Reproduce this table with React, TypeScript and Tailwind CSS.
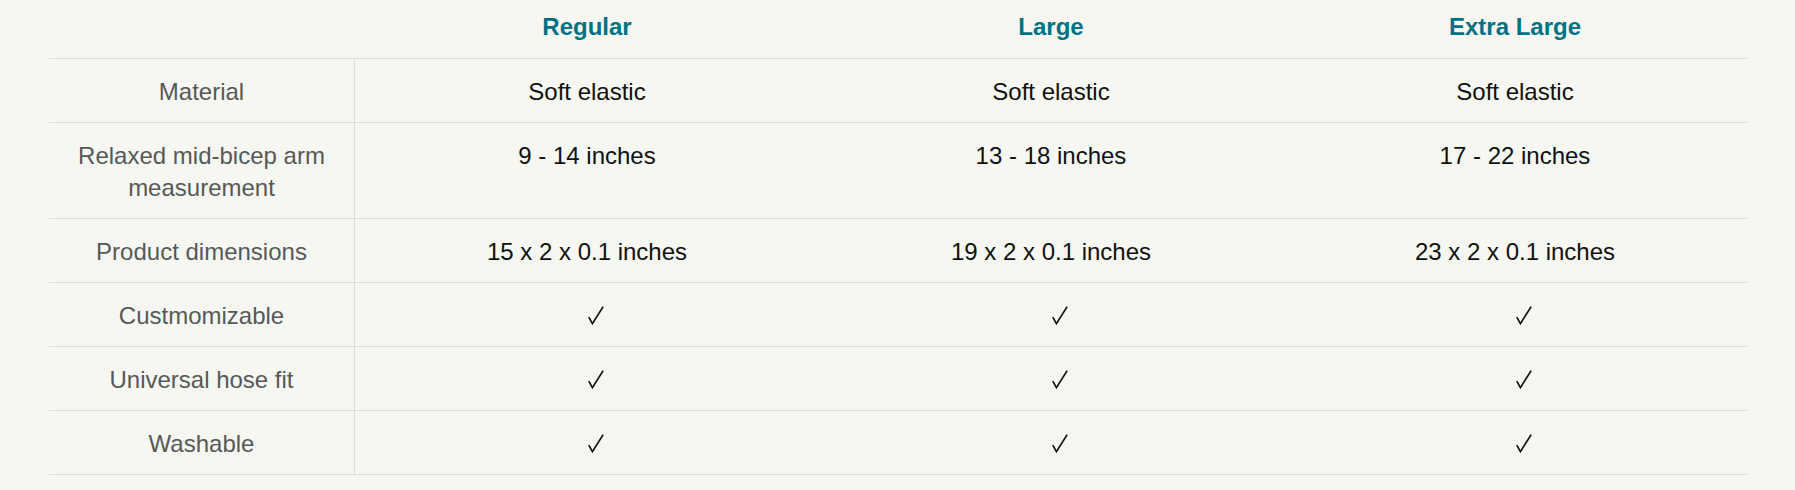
const sizes = ['Regular', 'Large', 'Extra Large'];

type Row = {
  label: string;
  values: string[] | null; // null means a check in every column
};

const rows: Row[] = [
  { label: 'Material', values: ['Soft elastic', 'Soft elastic', 'Soft elastic'] },
  { label: 'Relaxed mid-bicep arm measurement', values: ['9 - 14 inches', '13 - 18 inches', '17 - 22 inches'] },
  { label: 'Product dimensions', values: ['15 x 2 x 0.1 inches', '19 x 2 x 0.1 inches', '23 x 2 x 0.1 inches'] },
  { label: 'Custmomizable', values: null },
  { label: 'Universal hose fit', values: null },
  { label: 'Washable', values: null },
];

// thin check like the one in the table
function Check() {
  return (
    <div className="flex h-[32px] items-start justify-center pl-[18px] pt-[6px]">
      <svg width="16" height="19" viewBox="0 0 16 19" fill="none" aria-label="yes">
        <path d="M0.8 11.2 L4.4 17.6 L15.2 0.6" stroke="#0f1111" strokeWidth="1.7" strokeLinejoin="miter" />
      </svg>
    </div>
  );
}

export default function App() {
  return (
    <div className="min-h-screen w-full bg-[#f7f7f2] font-['Liberation_Sans',Arial,sans-serif] text-[24px] leading-[32px]">
      <div className="ml-[49px] w-[1698px]">
        <div className="grid grid-cols-[306px_1fr_1fr_1fr] border-b border-[#dddddd]">
          <div />
          {sizes.map((s) => (
            <div key={s} className="pt-[11px] pb-[15px] text-center font-bold text-[#007185]">
              {s}
            </div>
          ))}
        </div>
        {rows.map((row) => (
          <div key={row.label} className="grid grid-cols-[306px_1fr_1fr_1fr] border-b border-[#dddddd]">
            <div className="border-r border-[#dddddd] px-[20px] pt-[17px] pb-[14px] text-center text-[#565959]">
              {row.label}
            </div>
            {sizes.map((s, i) => (
              <div key={s} className="pt-[17px] pb-[14px] text-center text-[#0f1111]">
                {row.values ? row.values[i] : <Check />}
              </div>
            ))}
          </div>
        ))}
      </div>
    </div>
  );
}
